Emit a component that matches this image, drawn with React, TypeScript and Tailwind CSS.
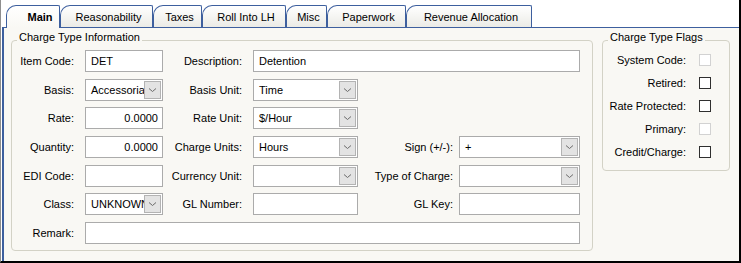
import React from 'react';

type Tab = { label: string; w: string; selected?: boolean };

const tabs: Tab[] = [
  { label: 'Main', w: 'w-[54px]', selected: true },
  { label: 'Reasonability', w: 'w-[93px]' },
  { label: 'Taxes', w: 'w-[49px]' },
  { label: 'Roll Into LH', w: 'w-[84px]' },
  { label: 'Misc', w: 'w-[41px]' },
  { label: 'Paperwork', w: 'w-[79px]' },
  { label: 'Revenue Allocation', w: 'w-[126px]' },
];

function Chevron() {
  return (
    <svg width="9" height="6" viewBox="0 0 9 6" fill="none">
      <path d="M1 1.5 L4.5 4.5 L8 1.5" stroke="#6b6b6b" strokeWidth="1" />
    </svg>
  );
}

function TextBox({ value, right, className = '' }: { value?: string; right?: boolean; className?: string }) {
  return (
    <div
      className={`h-[22px] border border-[#ababab] bg-white flex items-center whitespace-nowrap overflow-hidden ${
        right ? 'justify-end pr-[4px]' : 'pl-[5px]'
      } ${className}`}
    >
      {value}
    </div>
  );
}

function Combo({ value }: { value?: string }) {
  return (
    <div className="h-[22px] border border-[#ababab] bg-white flex items-center">
      <div className="flex-1 min-w-0 pl-[5px] whitespace-nowrap overflow-hidden">{value}</div>
      <div className="w-[17px] h-[18px] mr-[1px] shrink-0 border border-[#b3b3b3] bg-[#e3e3e3] flex items-center justify-center">
        <Chevron />
      </div>
    </div>
  );
}

function Label({ text, pr }: { text: string; pr: string }) {
  return <div className={`flex items-center justify-end whitespace-nowrap ${pr}`}>{text}</div>;
}

function Check({ disabled }: { disabled?: boolean }) {
  return (
    <span
      className={`w-[12px] h-[12px] bg-white border ${disabled ? 'border-[#d2d2d2]' : 'border-[#2f2f2f]'}`}
    />
  );
}

const flags = [
  { label: 'System Code:', disabled: true },
  { label: 'Retired:' },
  { label: 'Rate Protected:' },
  { label: 'Primary:', disabled: true },
  { label: 'Credit/Charge:' },
];

export default function App() {
  return (
    <div className="w-[741px] h-[263px] bg-white border-l border-l-[#8e8e8e] border-r-2 border-r-black border-b-2 border-b-black flex flex-col font-['Liberation_Sans',Arial,sans-serif] text-[11px] text-black leading-[14px]">
      {/* Tabs */}
      <div className="h-[27px] shrink-0 flex items-end pl-[5px]">
        {tabs.map((t) => (
          <div
            key={t.label}
            className={`${t.w} h-[22px] flex items-center justify-center border-t border-l border-r border-[#3d5f9e] rounded-tl-[10px] rounded-tr-[2px] whitespace-nowrap ${
              t.selected
                ? 'pl-[14px] font-bold bg-linear-to-b from-white to-[#f9f8f4] h-[23px] -mb-[1px] relative'
                : 'pl-[4px] bg-linear-to-b from-white to-[#ebebe6]'
            }`}
          >
            {t.label}
          </div>
        ))}
      </div>

      {/* Panel */}
      <div className="flex-1 ml-[1px] bg-[#f9f8f4] border-t border-l-2 border-[#3d5f9e] flex items-start gap-[9px] pl-[7px] pt-[2px]">
        <fieldset className="w-[582px] h-[221px] border border-[#d3d2c6] rounded-[4px] p-0 m-0">
          <legend className="ml-[5px] px-[2px] pb-[6px] leading-[14px]">Charge Type Information</legend>
          <div className="grid grid-cols-[73px_78px_90px_105px_101px_121px] grid-rows-[22px_22px_22px_22px_22px_22px_22px] gap-y-[6.7px]">
            <Label text="Item Code:" pr="pr-[11px]" />
            <TextBox value="DET" />
            <Label text="Description:" pr="pr-[11px]" />
            <TextBox value="Detention" className="col-span-3" />

            <Label text="Basis:" pr="pr-[11px]" />
            <Combo value="Accessorial" />
            <Label text="Basis Unit:" pr="pr-[11px]" />
            <Combo value="Time" />
            <div />
            <div />

            <Label text="Rate:" pr="pr-[11px]" />
            <TextBox value="0.0000" right />
            <Label text="Rate Unit:" pr="pr-[11px]" />
            <Combo value="$/Hour" />
            <div />
            <div />

            <Label text="Quantity:" pr="pr-[11px]" />
            <TextBox value="0.0000" right />
            <Label text="Charge Units:" pr="pr-[11px]" />
            <Combo value="Hours" />
            <Label text="Sign (+/-):" pr="pr-[6px]" />
            <Combo value="+" />

            <Label text="EDI Code:" pr="pr-[11px]" />
            <TextBox />
            <Label text="Currency Unit:" pr="pr-[11px]" />
            <Combo />
            <Label text="Type of Charge:" pr="pr-[6px]" />
            <Combo />

            <Label text="Class:" pr="pr-[11px]" />
            <Combo value="UNKNOWN" />
            <Label text="GL Number:" pr="pr-[11px]" />
            <TextBox />
            <Label text="GL Key:" pr="pr-[6px]" />
            <TextBox />

            <Label text="Remark:" pr="pr-[11px]" />
            <TextBox className="col-span-5" />
          </div>
        </fieldset>

        <fieldset className="w-[128px] h-[141px] border border-[#d3d2c6] rounded-[4px] p-0 m-0">
          <legend className="ml-[5px] px-[2px] pb-[6px] leading-[14px]">Charge Type Flags</legend>
          <div className="flex flex-col gap-[11px] pt-[4px]">
            {flags.map((f) => (
              <div key={f.label} className="flex items-center h-[12px]">
                <div className="w-[83px] text-right whitespace-nowrap">{f.label}</div>
                <div className="ml-[13px] flex">
                  <Check disabled={f.disabled} />
                </div>
              </div>
            ))}
          </div>
        </fieldset>
      </div>
    </div>
  );
}
